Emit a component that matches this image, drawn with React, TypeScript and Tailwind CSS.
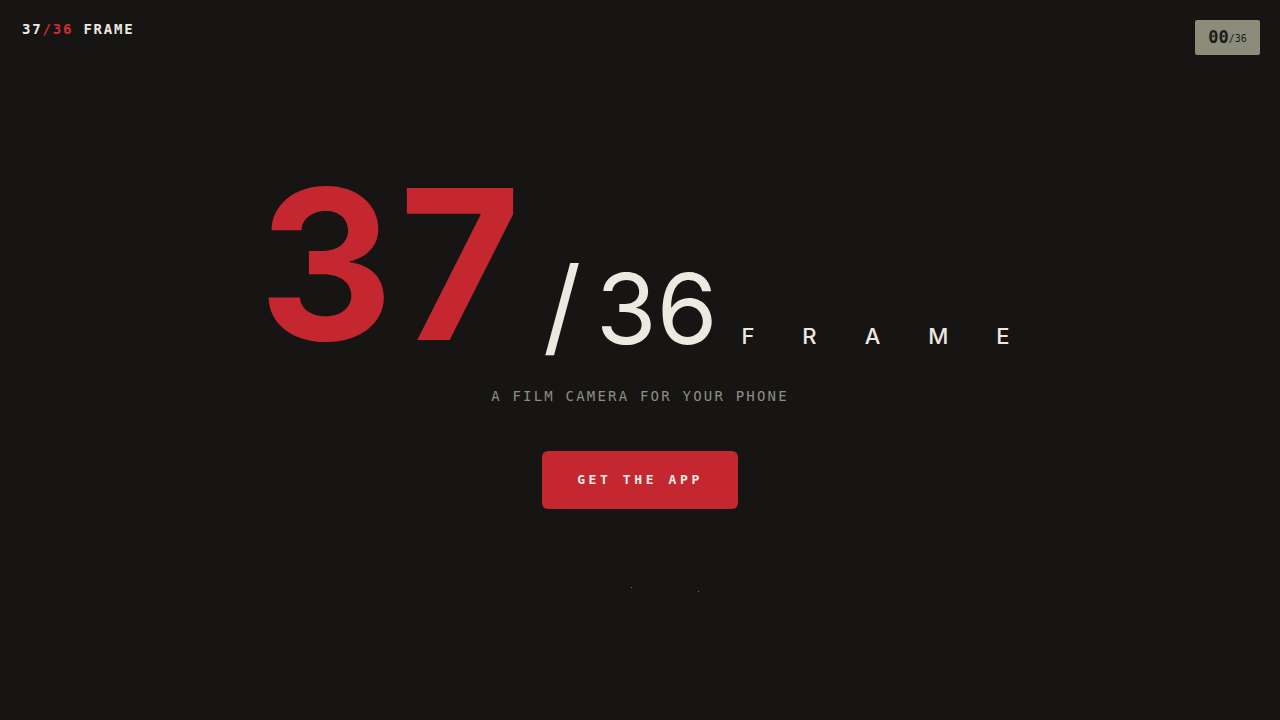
import React from "react"

const mono = { fontFamily: '"DejaVu Sans Mono", "Liberation Mono", monospace' }
const sans = { fontFamily: 'Inter, "Noto Sans", sans-serif' }

export default function App() {
  return (
    <div className="relative w-full h-[720px] bg-[#161514] overflow-hidden text-[#ede9e1]">
      <header className="flex justify-between items-start px-[22px] pt-[20px]">
        <div className="text-[14px] font-bold tracking-[1.8px] leading-[18px]" style={mono}>
          <span>37</span>
          <span className="text-[#d02a32]">/36</span>
          <span> FRAME</span>
        </div>
        <div className="mr-[-2px] w-[65px] h-[35px] rounded-[2px] bg-[#8b8c7a] flex items-center justify-center text-[#1b1b18]" style={mono}>
          <span className="text-[17px] font-bold leading-none">00</span>
          <span className="text-[10px] leading-none mt-[3px]">/36</span>
        </div>
      </header>

      <main className="flex flex-col items-center pt-[126px]">
        <div className="flex items-end ml-[-12px]">
          <span
            className="text-[209px] font-bold leading-[0.8] text-[#c4272f] tracking-[6px]"
            style={sans}
          >
            37
          </span>
          <span className="text-[98px] font-normal leading-[0.8] ml-[16px] mb-[-1px]" style={sans}>
            <span className="text-[106px] inline-block mr-[15px]">/</span>36
          </span>
          <span className="text-[22px] font-medium tracking-[48px] leading-none mb-[1px] ml-[24px] mr-[-48px]" style={sans}>
            FRAME
          </span>
        </div>

        <p className="mt-[38px] text-[14px] tracking-[2.2px] text-[#8f8d80]" style={mono}>
          A FILM CAMERA FOR YOUR PHONE
        </p>

        <button
          className="mt-[44px] w-[196px] h-[58px] rounded-[6px] bg-[#c4272f] text-[#f1ede6] text-[13px] font-bold tracking-[3.6px]"
          style={mono}
        >
          GET THE APP
        </button>
      </main>

      <span className="absolute left-[631px] top-[587px] w-[1px] h-[1px] bg-[#7a7a70]" />
      <span className="absolute left-[698px] top-[591px] w-[1px] h-[1px] bg-[#7a7a70]" />
    </div>
  )
}
